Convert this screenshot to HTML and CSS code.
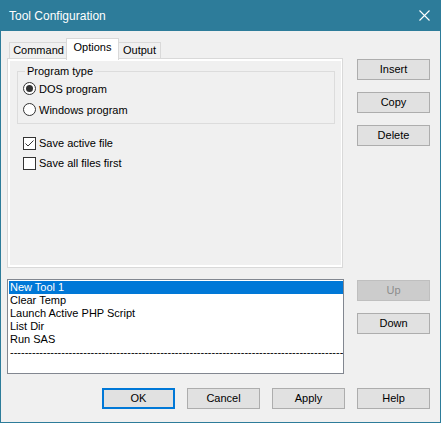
FILE: index.html
```html
<!DOCTYPE html>
<html>
<head>
<meta charset="utf-8">
<link rel="stylesheet" href="styles.css">
</head>
<body>
<div class="window">
  <div class="titlebar">
    <span class="title">Tool Configuration</span>
    <svg class="close" width="11" height="11" viewBox="0 0 11 11"><path d="M0.5 0.5 L10.5 10.5 M10.5 0.5 L0.5 10.5" stroke="#fff" stroke-width="1.1" fill="none"/></svg>
  </div>
  <div class="body">
    <div class="main">
      <div class="left-top">
        <div class="tabs">
          <div class="tab tab-command">Command</div>
          <div class="tab tab-options active">Options</div>
          <div class="tab tab-output">Output</div>
        </div>
        <div class="panel">
          <div class="group">
            <div class="group-label">Program type</div>
            <div class="opt-row">
              <span class="radio checked"></span><span class="opt-text">DOS program</span>
            </div>
            <div class="opt-row">
              <span class="radio"></span><span class="opt-text">Windows program</span>
            </div>
          </div>
          <div class="checks">
            <div class="opt-row check-row">
              <svg class="checkbox" width="13" height="13" viewBox="0 0 13 13"><rect x="0.5" y="0.5" width="12" height="12" fill="#fff" stroke="#333"/><path d="M2.5 6.5 L5 9 L10.5 3.5" stroke="#333" stroke-width="1" fill="none"/></svg><span class="opt-text">Save active file</span>
            </div>
            <div class="opt-row check-row">
              <svg class="checkbox" width="13" height="13" viewBox="0 0 13 13"><rect x="0.5" y="0.5" width="12" height="12" fill="#fff" stroke="#333"/></svg><span class="opt-text">Save all files first</span>
            </div>
          </div>
        </div>
      </div>
      <div class="right-top">
        <div class="btn">Insert</div>
        <div class="btn">Copy</div>
        <div class="btn">Delete</div>
      </div>
      <div class="listbox">
        <div class="item selected">New Tool 1</div>
        <div class="item">Clear Temp</div>
        <div class="item">Launch Active PHP Script</div>
        <div class="item">List Dir</div>
        <div class="item">Run SAS</div>
        <div class="item dashes">-------------------------------------------------------------------------------------------</div>
      </div>
      <div class="right-bottom">
        <div class="btn disabled">Up</div>
        <div class="btn">Down</div>
      </div>
    </div>
    <div class="footer">
      <div class="btn default">OK</div>
      <div class="btn">Cancel</div>
      <div class="btn">Apply</div>
      <div class="btn">Help</div>
    </div>
  </div>
</div>
</body>
</html>
```

FILE: styles.css
```css
* { box-sizing: border-box; }
html, body { margin: 0; padding: 0; }
body {
  width: 441px;
  height: 423px;
  overflow: hidden;
  font-family: "Liberation Sans", Arial, sans-serif;
  font-size: 11px;
  color: #000;
}
.window {
  width: 441px;
  height: 423px;
  border: 1px solid #2d7c9a;
  display: flex;
  flex-direction: column;
  background: #f0f0f0;
}
.titlebar {
  height: 30px;
  flex: none;
  background: #2d7c9a;
  display: flex;
  align-items: center;
  justify-content: space-between;
  padding: 0 10px 1px 8px;
}
.title {
  color: #fff;
  font-size: 12px;
  font-family: "Liberation Sans", Arial, sans-serif;
}
.close { display: block; }
.body {
  flex: 1;
  padding: 7px 10px 0 6px;
  display: flex;
  flex-direction: column;
}
.main {
  display: grid;
  grid-template-columns: 337px 73px;
  grid-template-rows: 230px 95px;
  column-gap: 13px;
  row-gap: 11px;
}
.left-top { display: flex; flex-direction: column; }
.tabs {
  height: 20px;
  display: flex;
  align-items: flex-end;
  padding-left: 2px;
  position: relative;
  z-index: 2;
}
.tab {
  height: 16px;
  border: 1px solid #d9d9d9;
  border-bottom: none;
  background: #f0f0f0;
  display: flex;
  align-items: center;
  justify-content: center;
  line-height: 13px;
  padding-bottom: 1px;
}
.tab-command { width: 59px; }
.tab-options { width: 53px; margin-left: -2px; }
.tab-output { width: 43px; margin-left: -1px; }
.tab.active {
  height: 22px;
  margin-bottom: -2px;
  background: #fff;
  padding-bottom: 4px;
  position: relative;
  z-index: 3;
}
.panel {
  width: 336px;
  height: 210px;
  border: 1px solid #d9d9d9;
  box-shadow: inset 2px 2px #fff, inset 0 -2px #fff, inset -1px 0 #fff;
  padding: 12px 0 0 9px;
}
.group {
  width: 318px;
  height: 53px;
  border: 1px solid #dcdcdc;
  padding: 0 0 0 5px;
}
.group-label {
  display: block;
  width: fit-content;
  margin: -7px 0 0 2px;
  padding: 0 2px;
  height: 13px;
  line-height: 13px;
  background: #f0f0f0;
}
.opt-row {
  height: 21px;
  display: flex;
  align-items: center;
}
.radio {
  width: 13px;
  height: 13px;
  border: 1px solid #333;
  border-radius: 50%;
  background: #fff;
  display: flex;
  align-items: center;
  justify-content: center;
  flex: none;
}
.radio.checked::after {
  content: "";
  width: 7px;
  height: 7px;
  border-radius: 50%;
  background: #333;
}
.opt-text { margin-left: 3px; }
.checks { padding: 9px 0 0 6px; }
.check-row { height: 20px; }
.checkbox { display: block; flex: none; }
.right-top {
  padding-top: 21px;
  display: flex;
  flex-direction: column;
  gap: 12px;
}
.right-bottom {
  padding-top: 1px;
  display: flex;
  flex-direction: column;
  gap: 12px;
}
.btn {
  height: 21px;
  width: 73px;
  border: 1px solid #adadad;
  background: #e1e1e1;
  display: flex;
  align-items: center;
  justify-content: center;
  line-height: 13px;
  flex: none;
}
.btn.disabled {
  background: #cccccc;
  border-color: #bfbfbf;
  color: #8c8c8c;
}
.btn.default {
  border: 2px solid #0078d7;
}
.listbox {
  border: 1px solid #828790;
  background: #fff;
  padding: 1px 0 0 1px;
  overflow: hidden;
}
.item {
  height: 13px;
  line-height: 13px;
  padding-left: 1px;
  white-space: nowrap;
  overflow: hidden;
}
.item.selected {
  background: #0078d7;
  color: #fff;
}
.footer {
  margin-top: 14px;
  display: flex;
  justify-content: flex-end;
  gap: 12px;
}
```
